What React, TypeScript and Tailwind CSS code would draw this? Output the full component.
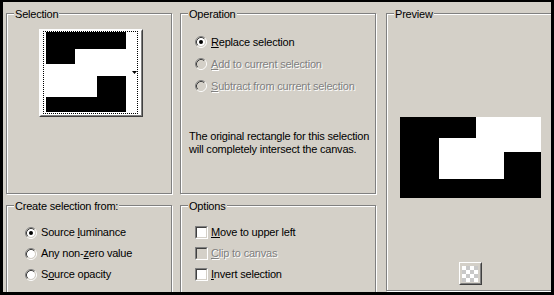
import React from "react";

function GroupBox({
  title,
  className = "",
  children,
}: {
  title: string;
  className?: string;
  children?: React.ReactNode;
}) {
  return (
    <div
      className={`relative shrink-0 border border-[#808080] shadow-[inset_1px_1px_0_#fff,1px_1px_0_#fff] ${className}`}
    >
      <span className="absolute left-[7px] top-[-6px] bg-[#d4d0c8] px-[1px] leading-[13px] whitespace-nowrap">
        {title}
      </span>
      {children}
    </div>
  );
}

function Radio({ checked = false, disabled = false }: { checked?: boolean; disabled?: boolean }) {
  return (
    <svg width="12" height="12" viewBox="0 0 12 12" className="shrink-0 block">
      <circle cx="6" cy="6" r="4" fill={disabled ? "#d4d0c8" : "#fff"} />
      <path d="M2.11 9.89 A5.5 5.5 0 0 1 9.89 2.11" stroke="#808080" fill="none" />
      <path d="M9.89 2.11 A5.5 5.5 0 0 1 2.11 9.89" stroke="#ffffff" fill="none" />
      <path d="M2.82 9.18 A4.5 4.5 0 0 1 9.18 2.82" stroke="#404040" fill="none" />
      <path d="M9.18 2.82 A4.5 4.5 0 0 1 2.82 9.18" stroke="#d4d0c8" fill="none" />
      {checked && <circle cx="6" cy="6" r="2" fill="#000" />}
    </svg>
  );
}

function Check({ disabled = false }: { disabled?: boolean }) {
  return (
    <div className="w-[13px] h-[13px] shrink-0 border border-t-[#808080] border-l-[#808080] border-b-white border-r-white">
      <div
        className={`w-full h-full border border-t-[#404040] border-l-[#404040] border-b-[#d4d0c8] border-r-[#d4d0c8] ${
          disabled ? "bg-[#d4d0c8]" : "bg-white"
        }`}
      />
    </div>
  );
}

const dis = "text-[#808080] [text-shadow:1px_1px_0_#fff]";

export default function App() {
  return (
    <div className="w-[554px] h-[295px] bg-black pt-[2px] pl-[3px] font-['Liberation_Sans',Arial,sans-serif] text-[11px] leading-[13px] tracking-[-0.2px] text-black">
      <div className="w-[548px] h-[290px] bg-[#d4d0c8] overflow-hidden flex gap-[8px] pl-[3px] pt-[11px]">
        {/* Left column */}
        <div className="flex flex-col gap-[11px] w-[166px] shrink-0">
          <GroupBox title="Selection" className="h-[181px]">
            <div className="pl-[32px] pt-[15px]">
              <div className="w-[104px] h-[88px] border border-t-white border-l-white border-b-[#404040] border-r-[#404040]">
                <div className="relative w-full h-full border border-t-white border-l-white border-b-[#808080] border-r-[#808080] bg-white">
                  <svg width="80" height="80" viewBox="0 0 80 80" className="block ml-[5px] mt-[1px]">
                    <rect width="80" height="80" fill="#fff" />
                    <rect x="0" y="0" width="80" height="17" fill="#000" />
                    <rect x="0" y="17" width="29" height="15" fill="#000" />
                    <rect x="51" y="44" width="29" height="21" fill="#000" />
                    <rect x="0" y="65" width="80" height="15" fill="#000" />
                  </svg>
                  <div className="absolute left-[2px] top-0 w-[95px] h-[83px] border border-dotted border-black" />
                  <svg width="5" height="3" viewBox="0 0 5 3" className="absolute left-[91px] top-[40px]">
                    <polygon points="0,0 5,0 2.5,3" fill="#000" />
                  </svg>
                </div>
              </div>
            </div>
          </GroupBox>
          <GroupBox title="Create selection from:" className="h-[110px]">
            <div className="pl-[18px] pt-[16px] flex flex-col">
              <div className="h-[21px] flex items-center">
                <Radio checked />
                <span className="ml-[4px] whitespace-nowrap">
                  Source <u>l</u>uminance
                </span>
              </div>
              <div className="h-[21px] flex items-center">
                <Radio />
                <span className="ml-[4px] whitespace-nowrap">
                  Any non-<u>z</u>ero value
                </span>
              </div>
              <div className="h-[21px] flex items-center">
                <Radio />
                <span className="ml-[4px] whitespace-nowrap">
                  S<u>o</u>urce opacity
                </span>
              </div>
            </div>
          </GroupBox>
        </div>

        {/* Middle column */}
        <div className="flex flex-col gap-[11px] w-[196px] shrink-0">
          <GroupBox title="Operation" className="h-[181px]">
            <div className="pt-[17px] pl-[8px]">
              <div className="pl-[6px] flex flex-col">
                <div className="h-[22px] flex items-center">
                  <Radio checked />
                  <span className="ml-[4px] whitespace-nowrap">
                    <u>R</u>eplace selection
                  </span>
                </div>
                <div className="h-[22px] flex items-center">
                  <Radio disabled />
                  <span className={`ml-[4px] whitespace-nowrap ${dis}`}>
                    <u>A</u>dd to current selection
                  </span>
                </div>
                <div className="h-[22px] flex items-center">
                  <Radio disabled />
                  <span className={`ml-[4px] whitespace-nowrap ${dis}`}>
                    <u>S</u>ubtract from current selection
                  </span>
                </div>
              </div>
              <p className="mt-[33px] whitespace-nowrap">
                The original rectangle for this selection
                <br />
                will completely intersect the canvas.
              </p>
            </div>
          </GroupBox>
          <GroupBox title="Options" className="h-[110px]">
            <div className="pl-[14px] pt-[16px] flex flex-col">
              <div className="h-[21px] flex items-center">
                <Check />
                <span className="ml-[3px] whitespace-nowrap">
                  <u>M</u>ove to upper left
                </span>
              </div>
              <div className="h-[21px] flex items-center">
                <Check disabled />
                <span className={`ml-[3px] whitespace-nowrap ${dis}`}>
                  <u>C</u>lip to canvas
                </span>
              </div>
              <div className="h-[21px] flex items-center">
                <Check />
                <span className="ml-[3px] whitespace-nowrap">
                  <u>I</u>nvert selection
                </span>
              </div>
            </div>
          </GroupBox>
        </div>

        {/* Preview */}
        <GroupBox title="Preview" className="w-[168px] h-[278px] ml-[2px]">
          <div className="flex flex-col items-center pt-[103px]">
            <svg width="141" height="81" viewBox="0 0 141 81" className="block">
              <rect width="141" height="81" fill="#000" />
              <rect x="76" y="0" width="65" height="35" fill="#fff" />
              <rect x="39" y="21" width="65" height="41" fill="#fff" />
            </svg>
            <div className="mt-[64px] w-[23px] h-[23px] border border-t-white border-l-white border-b-[#404040] border-r-[#404040]">
              <div className="w-full h-full border border-t-[#d4d0c8] border-l-[#d4d0c8] border-b-[#808080] border-r-[#808080] bg-[#d4d0c8] flex items-center justify-center">
                <svg width="16" height="16" viewBox="0 0 16 16" className="block">
                  <rect width="16" height="16" fill="#ffffff" />
                  <rect x="4" y="0" width="4" height="4" fill="#c8c8c8" />
                  <rect x="12" y="0" width="4" height="4" fill="#c8c8c8" />
                  <rect x="0" y="4" width="4" height="4" fill="#c8c8c8" />
                  <rect x="8" y="4" width="4" height="4" fill="#c8c8c8" />
                  <rect x="4" y="8" width="4" height="4" fill="#c8c8c8" />
                  <rect x="12" y="8" width="4" height="4" fill="#c8c8c8" />
                  <rect x="0" y="12" width="4" height="4" fill="#c8c8c8" />
                  <rect x="8" y="12" width="4" height="4" fill="#c8c8c8" />
                </svg>
              </div>
            </div>
          </div>
        </GroupBox>
      </div>
    </div>
  );
}
